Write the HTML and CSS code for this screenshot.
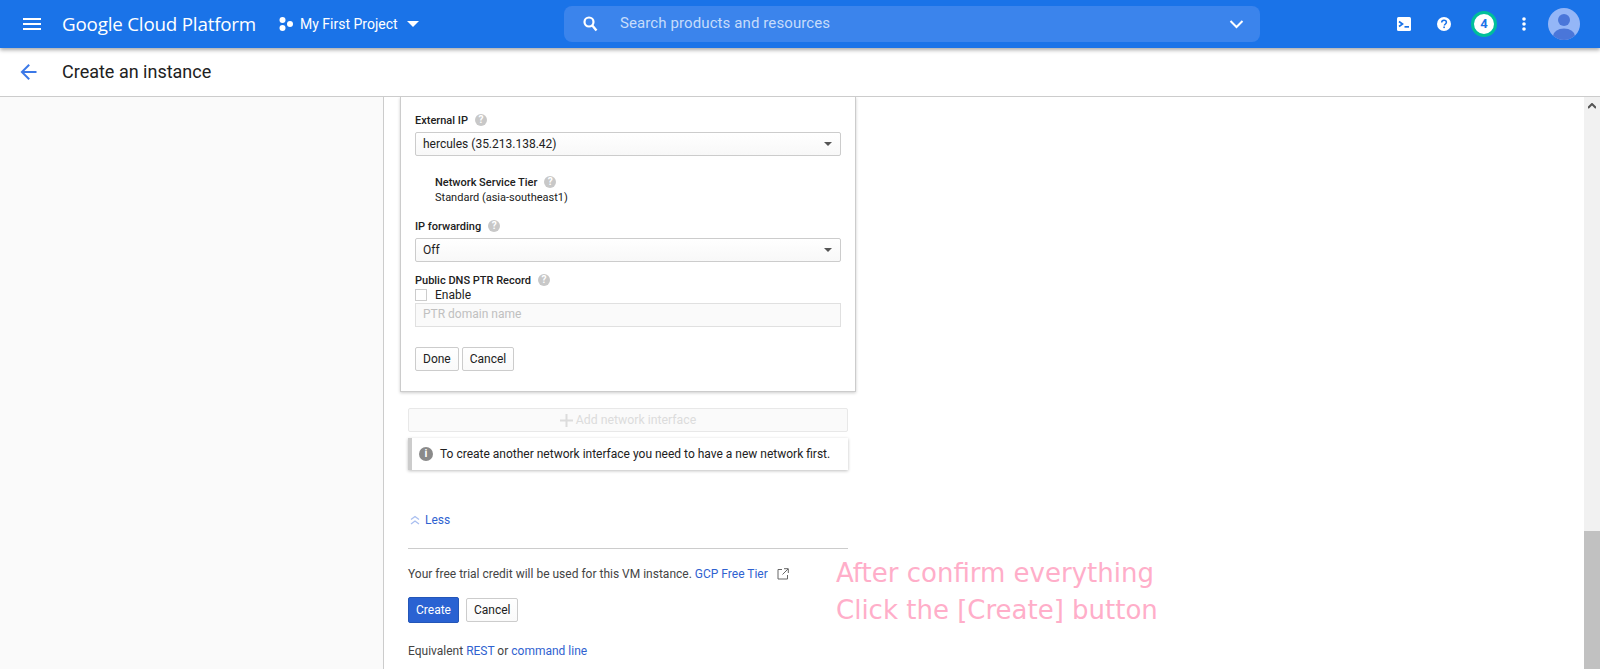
FILE: index.html
```html
<!DOCTYPE html>
<html lang="en">
<head>
    <meta charset="UTF-8">
    <title>Create an instance</title>
    <link rel="stylesheet" href="styles.css">
</head>
<body>
    <!-- Top bar -->
    <header class="topbar">
        <svg class="menu-icon" viewBox="0 0 18 12"><path d="M0 0h18v2H0zM0 5h18v2H0zM0 10h18v2H0z" fill="#fff"/></svg>
        <div class="brand">Google Cloud Platform</div>
        <div class="project">
            <svg class="project-dots" viewBox="0 0 14 14"><circle cx="3.5" cy="3" r="3" fill="#fff"/><circle cx="11" cy="7" r="3" fill="#fff"/><circle cx="3.5" cy="11" r="3" fill="#fff"/></svg>
            <span>My First Project</span>
            <svg class="project-caret" viewBox="0 0 12 6"><path d="M0 0h12L6 6z" fill="#fff"/></svg>
        </div>
        <div class="search">
            <svg class="search-icon" viewBox="0 0 15 16"><circle cx="6" cy="6" r="4.5" fill="none" stroke="#fff" stroke-width="2.2"/><path d="M9.3 9.6l4.2 5" stroke="#fff" stroke-width="2.4" fill="none"/></svg>
            <span class="search-text">Search products and resources</span>
            <svg class="search-chevron" viewBox="0 0 14 9"><path d="M1 1l6 6 6-6" fill="none" stroke="#fff" stroke-width="2"/></svg>
        </div>
        <div class="top-actions">
            <svg class="top-icon terminal" viewBox="0 0 14 14"><rect width="14" height="14" rx="1.5" fill="#fff"/><path d="M2 4.5L5.5 7 2 9.5" fill="none" stroke="#1a73e8" stroke-width="1.7"/><path d="M7.5 9h4.5v1.7H7.5z" fill="#1a73e8"/></svg>
            <svg class="top-icon help" viewBox="0 0 14 14"><circle cx="7" cy="7" r="7" fill="#fff"/><path d="M4.7 5.5C4.7 4.1 5.7 3.2 7 3.2s2.4.9 2.4 2.1c0 1.6-2 1.7-2 3.3" fill="none" stroke="#1a73e8" stroke-width="1.5"/><rect x="6.3" y="9.5" width="1.6" height="1.6" fill="#1a73e8"/></svg>
            <div class="badge">4</div>
            <svg class="top-icon more" viewBox="0 0 4 14"><circle cx="2" cy="2" r="1.8" fill="#fff"/><circle cx="2" cy="7" r="1.8" fill="#fff"/><circle cx="2" cy="12" r="1.8" fill="#fff"/></svg>
            <svg class="avatar" viewBox="0 0 32 32"><defs><clipPath id="avatar-clip"><circle cx="16" cy="16" r="16"/></clipPath></defs><circle cx="16" cy="16" r="16" fill="#94b6f7"/><g clip-path="url(#avatar-clip)"><circle cx="16" cy="12" r="6" fill="#4a76d9"/><ellipse cx="16" cy="28" rx="11" ry="7.5" fill="#4a76d9"/></g></svg>
        </div>
    </header>

    <!-- Page title -->
    <div class="subbar">
        <svg class="back-arrow" viewBox="0 0 16 16"><path d="M16 7H3.8l5.6-5.6L8 0 0 8l8 8 1.4-1.4L3.8 9H16z" fill="#3b78e7"/></svg>
        <h1>Create an instance</h1>
    </div>

    <div class="content">
        <aside class="side-panel"></aside>

        <main class="form-area">
            <section class="nic-card">
                <div class="field-label first">External IP <span class="hint">?</span></div>
                <div class="select-box"><span>hercules (35.213.138.42)</span><i class="select-caret"></i></div>

                <div class="tier">
                    <div class="field-label">Network Service Tier <span class="hint">?</span></div>
                    <div class="tier-value">Standard (asia-southeast1)</div>
                </div>

                <div class="field-label">IP forwarding <span class="hint">?</span></div>
                <div class="select-box"><span>Off</span><i class="select-caret"></i></div>

                <div class="field-label dns">Public DNS PTR Record <span class="hint">?</span></div>
                <label class="check-row"><span class="checkbox"></span>Enable</label>
                <div class="text-input">PTR domain name</div>

                <div class="card-buttons">
                    <button class="btn">Done</button>
                    <button class="btn">Cancel</button>
                </div>
            </section>

            <div class="add-nic">
                <svg class="plus" viewBox="0 0 13 13"><path d="M5.5 0h2v5.5H13v2H7.5V13h-2V7.5H0v-2h5.5z" fill="#dcdcdc"/></svg>
                Add network interface
            </div>
            <div class="notice">
                <span class="info-icon">i</span>
                To create another network interface you need to have a new network first.
            </div>

            <a class="less-link">
                <svg viewBox="0 0 10 10"><path d="M1 4.5l4-3 4 3M1 9l4-3 4 3" fill="none" stroke="#a9bff0" stroke-width="1.3"/></svg>
                Less
            </a>

            <hr class="divider">

            <div class="trial">
                <span>Your free trial credit will be used for this VM instance. <a>GCP Free Tier</a></span>
                <svg class="ext-icon" viewBox="0 0 12 12"><path d="M5 1.5H1v9.5h9.5V7M7 .7h4.3V5M11 1L5.5 6.5" fill="none" stroke="#666" stroke-width="1"/></svg>
            </div>

            <div class="form-buttons">
                <button class="btn primary">Create</button>
                <button class="btn">Cancel</button>
            </div>

            <p class="equivalent">Equivalent <a>REST</a> or <a>command line</a></p>
        </main>

        <div class="scrollbar">
            <svg class="scroll-up" viewBox="0 0 8 6"><path d="M0 5l4-4 4 4" fill="none" stroke="#555" stroke-width="2"/></svg>
            <div class="scroll-thumb"></div>
        </div>

        <!-- Pink note drawn on top of the screenshot -->
        <div class="note">After confirm everything<br>Click the [Create] button</div>
    </div>
</body>
</html>
```

FILE: styles.css
```css
/* Global */
html, body {
    margin: 0;
    height: 669px;
    overflow: hidden;
}

body {
    display: flex;
    flex-direction: column;
    font-family: Roboto, "Liberation Sans", sans-serif;
    font-size: 12px;
    color: #212121;
    background: #fff;
}

a {
    color: #2f62d0;
}

/* Top bar */
.topbar {
    display: flex;
    align-items: center;
    flex: 0 0 48px;
    background-color: #1a73e8;
    color: #fff;
    box-shadow: 0 2px 4px rgba(0, 0, 0, 0.35);
    position: relative;
    z-index: 2;
}

.menu-icon {
    width: 18px;
    height: 12px;
    margin-left: 23px;
}

.brand {
    margin-left: 21px;
    width: 217px;
    font-family: "Open Sans", Roboto, sans-serif;
    font-size: 18.8px;
    letter-spacing: -0.2px;
}

.project {
    display: flex;
    align-items: center;
    width: 285px;
    font-size: 14px;
    font-weight: 400;
}

.project-dots {
    width: 14px;
    height: 14px;
    margin-right: 7px;
}

.project-caret {
    width: 12px;
    height: 6px;
    margin-left: 9px;
}

.search {
    display: flex;
    align-items: center;
    width: 696px;
    height: 36px;
    background-color: #3b84ec;
    border-radius: 8px;
    box-sizing: border-box;
    padding: 0 16px 0 19px;
}

.search-icon {
    width: 15px;
    height: 16px;
}

.search-text {
    flex: 1;
    margin: -2px 0 0 22px;
    font-size: 15px;
    letter-spacing: 0.1px;
    color: #c6dcfb;
}

.search-chevron {
    width: 15px;
    height: 9px;
}

.top-actions {
    display: flex;
    align-items: center;
    margin-left: 137px;
}

.top-icon {
    width: 14px;
    height: 14px;
}

.help {
    margin-left: 26px;
}

.badge {
    width: 26px;
    height: 26px;
    margin-left: 20px;
    box-sizing: border-box;
    border: 3px solid #00bf9a;
    border-radius: 50%;
    background: #fff;
    color: #1a73e8;
    font-size: 13px;
    font-weight: 700;
    line-height: 20px;
    text-align: center;
}

.more {
    width: 4px;
    margin-left: 25px;
}

.avatar {
    width: 32px;
    height: 32px;
    margin-left: 22px;
}

/* Page title */
.subbar {
    display: flex;
    align-items: center;
    flex: 0 0 49px;
    box-sizing: border-box;
    border-bottom: 1px solid #ccc;
}

.subbar h1 {
    margin: -2px 0 0 25px;
    font-size: 18px;
    font-weight: 400;
    color: #212121;
}

.back-arrow {
    width: 17px;
    height: 16px;
    margin-left: 20px;
}

/* Main layout */
.content {
    display: flex;
    flex: 1;
    position: relative;
    min-height: 0;
}

.side-panel {
    flex: 0 0 383px;
    background-color: #fafafa;
    border-right: 1px solid #ccc;
}

.form-area {
    flex: 1;
    padding-left: 24px;
    overflow: hidden;
}

/* Network interface card */
.nic-card {
    width: 456px;
    height: 295px;
    margin-left: -8px;
    padding: 0 14px;
    box-sizing: border-box;
    border: 1px solid #ccc;
    border-top: none;
    background: #fff;
    box-shadow: 0 1px 3px rgba(0, 0, 0, 0.2);
}

.field-label {
    display: flex;
    align-items: center;
    height: 14px;
    margin: 6px 0 5px;
    font-size: 11px;
    font-weight: 500;
    color: #212121;
}

.field-label.first {
    padding-top: 16px;
    margin-top: 0;
}

.field-label.dns {
    margin-top: 11px;
    margin-bottom: 0;
}

.hint {
    display: inline-block;
    width: 12px;
    height: 12px;
    margin-left: 7px;
    border-radius: 50%;
    background: #c8c8c8;
    color: #fff;
    font-size: 10px;
    font-weight: 700;
    line-height: 12px;
    text-align: center;
}

.select-box {
    display: flex;
    align-items: center;
    justify-content: space-between;
    height: 24px;
    padding: 0 8px 0 7px;
    box-sizing: border-box;
    border: 1px solid #ccc;
    border-radius: 2px;
    background: linear-gradient(#fff, #f8f8f8);
    color: #212121;
}

.select-caret {
    width: 0;
    height: 0;
    border: 4px solid transparent;
    border-top: 4px solid #555;
    border-bottom: none;
}

.tier {
    padding: 19px 0 0 20px;
}

.tier .field-label {
    margin: 0;
}

.tier-value {
    font-size: 11px;
    line-height: 16px;
    margin: 1px 0 13px;
}

.check-row {
    display: flex;
    align-items: center;
    height: 15px;
    font-size: 12px;
}

.checkbox {
    width: 12px;
    height: 12px;
    margin-right: 8px;
    border: 1px solid #ccc;
    box-sizing: border-box;
    background: #fff;
}

.text-input {
    height: 24px;
    margin-top: 1px;
    padding-left: 7px;
    box-sizing: border-box;
    border: 1px solid #e0e0e0;
    background: #fafafa;
    color: #c0c0c0;
    line-height: 20px;
}

.card-buttons {
    display: flex;
    gap: 3px;
    margin-top: 20px;
}

/* Buttons */
.btn {
    height: 24px;
    padding: 0 7px;
    border: 1px solid #ccc;
    border-radius: 2px;
    background: linear-gradient(#fff, #fafafa);
    color: #212121;
    font-family: Roboto, sans-serif;
    font-size: 12px;
}

.btn.primary {
    height: 26px;
    padding: 0 7px;
    border-color: #2456b8;
    background: #2a62d2;
    color: #fff;
}

/* Add network interface */
.add-nic {
    display: flex;
    align-items: center;
    justify-content: center;
    gap: 3px;
    width: 440px;
    height: 24px;
    margin-top: 16px;
    box-sizing: border-box;
    border: 1px solid #e8e8e8;
    border-radius: 2px;
    background: #fafafa;
    color: #dcdcdc;
    font-size: 12.3px;
    font-weight: 400;
}

.plus {
    width: 13px;
    height: 13px;
}

.notice {
    display: flex;
    align-items: center;
    width: 440px;
    height: 32px;
    margin-top: 6px;
    box-sizing: border-box;
    border-left: 4px solid #ccc;
    background: #fff;
    box-shadow: 0 1px 3px rgba(0, 0, 0, 0.25);
    color: #212121;
}

.info-icon {
    width: 14px;
    height: 14px;
    margin: 0 7px;
    border-radius: 50%;
    background: #8a8a8a;
    color: #fff;
    font-size: 11px;
    font-weight: 700;
    line-height: 14px;
    text-align: center;
}

.less-link {
    display: flex;
    align-items: center;
    gap: 5px;
    margin: 42px 0 0 2px;
    height: 16px;
}

.less-link svg {
    width: 10px;
    height: 10px;
}

.divider {
    width: 440px;
    height: 1px;
    margin: 20px 0 0;
    border: none;
    background: #ccc;
}

.trial {
    display: flex;
    align-items: center;
    height: 16px;
    margin: 17px 0 0;
    color: #444;
}

.ext-icon {
    width: 12px;
    height: 12px;
    margin-left: 9px;
}

.form-buttons {
    display: flex;
    align-items: center;
    gap: 7px;
    margin-top: 15px;
}

.equivalent {
    margin: 20px 0 0;
    line-height: 16px;
    color: #444;
}

/* Scrollbar */
.scrollbar {
    display: flex;
    flex-direction: column;
    justify-content: space-between;
    flex: 0 0 16px;
    background: #f1f1f1;
}

.scroll-up {
    width: 8px;
    height: 6px;
    margin: 6px 4px 0;
}

.scroll-thumb {
    height: 138px;
    background: #c1c1c1;
}

/* Annotation */
.note {
    position: absolute;
    left: 836px;
    top: 458px;
    font-family: "DejaVu Sans", sans-serif;
    font-size: 26px;
    line-height: 37px;
    color: #ffaec9;
}
```
